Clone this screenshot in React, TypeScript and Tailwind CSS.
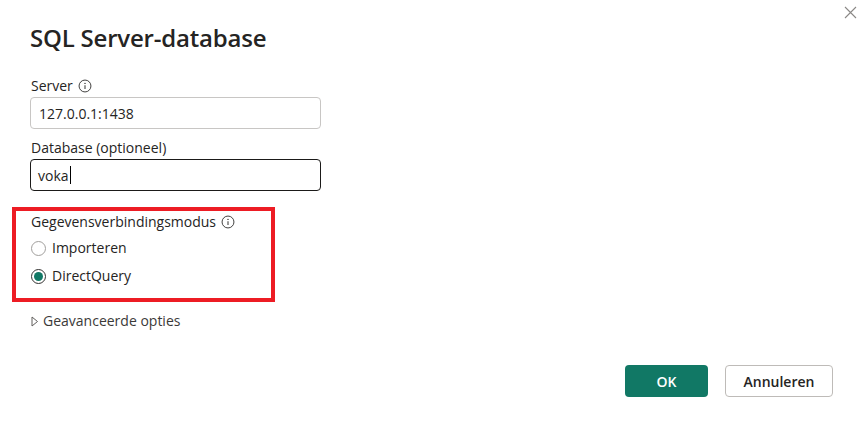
import { useState } from 'react'

function InfoIcon() {
  return (
    <svg width="14" height="14" viewBox="0 0 16 16" className="text-[#3b3a39]" fill="none">
      <circle cx="8" cy="8" r="6.8" stroke="currentColor" strokeWidth="1.1" />
      <circle cx="8" cy="5" r="0.85" fill="currentColor" />
      <path d="M8 7v4.4" stroke="currentColor" strokeWidth="1.2" />
    </svg>
  )
}

function Radio({ label, checked, onClick }: { label: string; checked: boolean; onClick: () => void }) {
  return (
    <button type="button" onClick={onClick} className="flex h-[28px] items-center gap-[6px] text-left">
      <span
        className={`flex h-[15px] w-[15px] items-center justify-center rounded-full border ${
          checked ? 'border-[#323130]' : 'border-[#a19f9d]'
        }`}
      >
        {checked && <span className="h-[9px] w-[9px] rounded-full bg-[#117865]" />}
      </span>
      <span className="text-[14px] leading-5 text-[#252423]">{label}</span>
    </button>
  )
}

export default function App() {
  const [mode, setMode] = useState<'import' | 'direct'>('direct')

  return (
    <div className="relative h-[430px] w-[867px] overflow-hidden bg-white pl-[30px] pt-[22px] font-['Open_Sans',sans-serif] text-[#252423]">
      <button type="button" className="absolute right-[9px] top-[5px] p-[1px] text-[#8a8886]">
        <svg width="13" height="13" viewBox="0 0 13 13">
          <path d="M1 1l11 11M12 1L1 12" stroke="currentColor" strokeWidth="1.1" />
        </svg>
      </button>

      <h1 className="text-[24px] font-semibold leading-[32px] tracking-[-0.2px]">SQL Server-database</h1>

      <div className="mt-[22px] flex items-center gap-[5px] pl-[1px] text-[14px] leading-5">
        Server <InfoIcon />
      </div>
      <div className="mt-[1px] flex h-[32px] w-[291px] items-center rounded-[4px] border border-[#c8c6c4] px-[8px] text-[14px]">
        127.0.0.1:1438
      </div>

      <div className="mt-[9px] pl-[1px] text-[14px] leading-5">Database (optioneel)</div>
      <div className="mt-[1px] flex h-[32px] w-[291px] items-center rounded-[4px] border-[1.5px] border-[#1b1a19] px-[7px] text-[14px]">
        voka<span className="ml-[1px] h-[18px] w-px bg-black" />
      </div>

      <div className="ml-[-18px] mt-[16px] h-[95px] w-[263px] border-4 border-[#ed1c24] pl-[15px] pt-[1px]">
        <div className="flex items-center gap-[5px] text-[14px] leading-5">
          Gegevensverbindingsmodus <InfoIcon />
        </div>
        <div className="mt-[2px] flex flex-col">
          <Radio label="Importeren" checked={mode === 'import'} onClick={() => setMode('import')} />
          <Radio label="DirectQuery" checked={mode === 'direct'} onClick={() => setMode('direct')} />
        </div>
      </div>

      <div className="mt-[9px] flex items-center gap-[4px] pl-[1px] text-[14px] leading-5 text-[#3b3a39]">
        <svg width="8" height="11" viewBox="0 0 8 11" fill="none">
          <path d="M1 1l5.5 4.5L1 10z" stroke="#605e5c" strokeWidth="1" strokeLinejoin="round" />
        </svg>
        Geavanceerde opties
      </div>

      <div className="mt-[34px] flex justify-end gap-[17px] pr-[34px]">
        <button type="button" className="h-[32px] w-[83px] rounded-[4px] bg-[#117865] text-[14px] font-semibold text-white">
          OK
        </button>
        <button
          type="button"
          className="h-[32px] w-[108px] rounded-[4px] border border-[#bebbb8] bg-white text-[14px] font-semibold text-[#252423]"
        >
          Annuleren
        </button>
      </div>
    </div>
  )
}
